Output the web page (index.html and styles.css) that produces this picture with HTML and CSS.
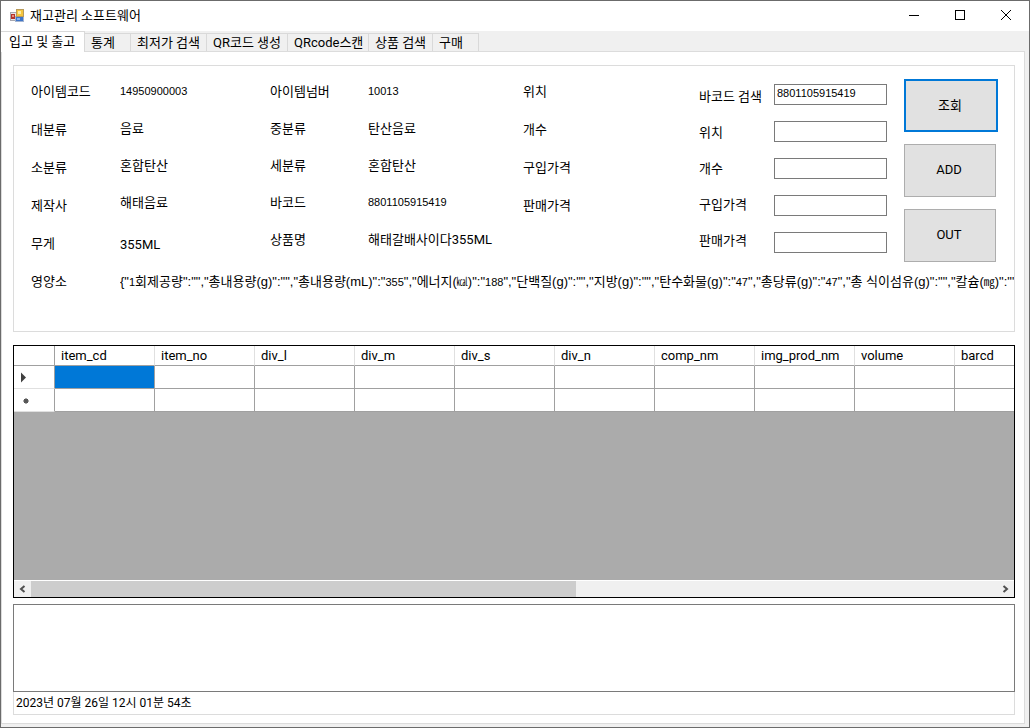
FILE: index.html
```html
<!DOCTYPE html>
<html lang="ko">
<head>
<meta charset="utf-8">
<title>재고관리 소프트웨어</title>
<link rel="stylesheet" href="styles.css">
</head>
<body>
<div class="window">
  <header class="titlebar">
    <svg class="app-icon" width="16" height="16" viewBox="0 0 16 16" aria-hidden="true">
      <rect x="0.500" y="4.500" width="6" height="8" fill="#e8e4e4" stroke="#a8a8b0"/>
      <rect x="1" y="6" width="4" height="5" fill="#b5332a"/>
      <rect x="2" y="7" width="2" height="2" fill="#e89080"/>
      <rect x="5.500" y="8.500" width="8" height="5" fill="#3d74c8" stroke="#a3b4d0"/>
      <rect x="7" y="10" width="3" height="2" fill="#8ab4ec"/>
      <rect x="6.500" y="1.500" width="7" height="7" fill="#f5c53c" stroke="#b89a5a"/>
      <rect x="8" y="3" width="3" height="3" fill="#fdeba0"/>
    </svg>
    <h1 class="title">재고관리 소프트웨어</h1>
    <div class="controls">
      <button class="control" type="button" aria-label="최소화"><svg width="10" height="10" viewBox="0 0 10 10"><path d="M0 5.500H10" stroke="#000"/></svg></button>
      <button class="control" type="button" aria-label="최대화"><svg width="10" height="10" viewBox="0 0 10 10"><rect x=".5" y=".5" width="9" height="9" fill="none" stroke="#000"/></svg></button>
      <button class="control" type="button" aria-label="닫기"><svg width="10" height="10" viewBox="0 0 10 10"><path d="M0 0L10 10M10 0L0 10" stroke="#000"/></svg></button>
    </div>
  </header>
  <nav class="tabs" role="tablist">
    <button class="tab active" type="button" role="tab" aria-selected="true">입고 및 출고</button>
    <button class="tab tab-s" type="button" role="tab">통계</button>
    <button class="tab tab-m" type="button" role="tab">최저가 검색</button>
    <button class="tab tab-l" type="button" role="tab">QR코드 생성</button>
    <button class="tab tab-l" type="button" role="tab">QRcode스캔</button>
    <button class="tab tab-n" type="button" role="tab">상품 검색</button>
    <button class="tab tab-s" type="button" role="tab">구매</button>
  </nav>
  <main class="page">
    <section class="details">
      <div class="labels"><span>아이템코드</span><span>대분류</span><span>소분류</span><span>제작사</span><span>무게</span></div>
      <div class="values spread"><span class="num">14950900003</span><span>음료</span><span>혼합탄산</span><span>해태음료</span><span>355ML</span></div>
      <div class="values"><span>아이템넘버</span><span>중분류</span><span>세분류</span><span>바코드</span><span>상품명</span></div>
      <div class="values"><span class="num">10013</span><span>탄산음료</span><span>혼합탄산</span><span class="num">8801105915419</span><span>해태갈배사이다355ML</span></div>
      <div class="labels"><span>위치</span><span>개수</span><span>구입가격</span><span>판매가격</span></div>
      <div class="field-labels">
        <label for="barcode">바코드 검색</label><label for="place">위치</label><label for="count">개수</label><label for="buy">구입가격</label><label for="sell">판매가격</label>
      </div>
      <div class="fields">
        <input class="num" id="barcode" type="text" value="8801105915419">
        <input class="num" id="place" type="text">
        <input class="num" id="count" type="text">
        <input class="num" id="buy" type="text">
        <input class="num" id="sell" type="text">
      </div>
      <div class="actions">
        <button class="action default" type="button">조회</button>
        <button class="action" type="button">ADD</button>
        <button class="action" type="button">OUT</button>
      </div>
      <span class="nutrition-label">영양소</span>
      <span class="nutrition">{"<span class="num">1</span>회제공량":"","총내용량(g)":"","총내용량(mL)":"<span class="num">355</span>","에너지(<span class="num">㎉</span>)":"<span class="num">188</span>","단백질(g)":"","지방(g)":"","탄수화물(g)":"<span class="num">47</span>","총당류(g)":"<span class="num">47</span>","총 식이섬유(g)":"","칼슘(<span class="num">㎎</span>)":""</span>
    </section>
    <section class="data">
      <div class="table-view">
        <table>
          <thead><tr><th class="stub"></th><th>item_cd</th><th>item_no</th><th>div_l</th><th>div_m</th><th>div_s</th><th>div_n</th><th>comp_nm</th><th>img_prod_nm</th><th>volume</th><th>barcd</th></tr></thead>
          <tbody>
            <tr><th class="stub"><svg width="22" height="12" viewBox="0 0 22 12"><path d="M7 1.500L12 6.500L7 11.500Z" fill="#404040"/></svg></th><td class="selected"></td><td></td><td></td><td></td><td></td><td></td><td></td><td></td><td></td><td></td></tr>
            <tr><th class="stub"><svg width="22" height="12" viewBox="0 0 22 12"><circle cx="12" cy="7" r="2" fill="#444"/><path d="M12 4V10M9 7H15M10 5L14 9M14 5L10 9" stroke="#555"/></svg></th><td></td><td></td><td></td><td></td><td></td><td></td><td></td><td></td><td></td><td></td></tr>
          </tbody>
        </table>
      </div>
      <div class="scrollbar">
        <button class="arrow" type="button" aria-label="왼쪽"><svg width="7" height="8" viewBox="0 0 7 8"><path d="M5.500 1L2 4L5.500 7" fill="none" stroke="#505050" stroke-width="2"/></svg></button>
        <div class="track"><div class="thumb"></div></div>
        <button class="arrow" type="button" aria-label="오른쪽"><svg width="7" height="8" viewBox="0 0 7 8"><path d="M1.500 1L5 4L1.500 7" fill="none" stroke="#505050" stroke-width="2"/></svg></button>
      </div>
    </section>
    <textarea class="log" aria-label="기록"></textarea>
    <footer class="clock">2023년 07월 26일 12시 01분 54초</footer>
  </main>
</div>
</body>
</html>
```
FILE: styles.css
```css
* { box-sizing: border-box; }
body, button, input, textarea {
  margin: 0;
  font-family: Roboto, "Noto Sans CJK KR", sans-serif;
  font-size: 13px;
  color: #000;
}
.window {
  display: flex;
  flex-direction: column;
  min-height: 100vh;
  border: 1px solid #6b6b6b;
  background: #f0f0f0;
}
.titlebar {
  display: flex;
  align-items: center;
  height: 30px;
  padding-left: 9px;
  background: #fff;
}
.title { flex: 1; margin: 0 0 0 4px; font-size: 13px; font-weight: 400; line-height: 28px; }
.controls { display: flex; align-self: stretch; }
.control {
  display: flex;
  align-items: center;
  justify-content: center;
  width: 46px;
  padding: 0 0 2px;
  border: 0;
  background: transparent;
}
.tabs { display: flex; align-items: flex-end; height: 20px; white-space: nowrap; }
.tab {
  height: 18px;
  padding: 0 0 0 6px;
  border: 1px solid #d9d9d9;
  border-width: 1px 1px 0 0;
  background: #f0f0f0;
  line-height: 17px;
  text-align: left;
}
.tab.active {
  position: relative;
  z-index: 1;
  width: 84px;
  height: 21px;
  margin-bottom: -1px;
  padding: 0 0 2px 8px;
  background: #fff;
}
.tab-s { width: 46px; }
.tab-m { width: 76px; }
.tab-l { width: 81px; }
.tab-n { width: 64px; }
.page {
  flex: 1;
  display: flex;
  flex-direction: column;
  margin: 0 4px 3px 0;
  padding: 13px 9px 8px 11px;
  border: 1px solid #dcdcdc;
  background: #fff;
}
.details {
  display: grid;
  grid-template-columns: 89px 150px 98px 155px 1fr 75px 130px 94px;
  align-content: start;
  min-height: 267px;
  padding: 7px 16px 0 17px;
  border: 1px solid #dcdcdc;
  white-space: nowrap;
}
.labels, .values, .field-labels, .fields, .actions { display: flex; flex-direction: column; }
.labels { line-height: 38px; }
.values { line-height: 37px; }
.values span { height: 37px; }
.spread span:last-child { margin-top: auto; }
.details .num { font-family: "Liberation Sans", "Noto Sans CJK KR", sans-serif; font-size: 11px; }
.field-labels { padding-top: 6px; line-height: 36px; }
.fields { align-items: flex-start; gap: 16px; padding-top: 11px; }
.fields input {
  width: 113px;
  height: 21px;
  padding: 0 2px 4px;
  border: 1px solid #7a7a7a;
  background: #fff;
}
.actions { align-items: flex-start; gap: 12px; padding-top: 6px; }
.action {
  width: 92px;
  height: 53px;
  padding: 0 2px 2px 0;
  border: 1px solid #adadad;
  background: #e1e1e1;
}
.action.default { width: 94px; border: 2px solid #0078d7; }
.nutrition-label, .nutrition { line-height: 38px; }
.nutrition {
  grid-column: 2 / -1;
  min-width: 0;
  margin-right: -16px;
  overflow: hidden;
  font-family: "Liberation Sans", "Noto Sans CJK KR", sans-serif;
}
.data {
  flex: 1;
  display: flex;
  flex-direction: column;
  margin-top: 13px;
  border: 1px solid #000;
  background: #ababab;
}
.table-view { flex: 1; overflow: hidden; display: grid; align-content: start; }
table { width: 1041px; table-layout: fixed; border-collapse: separate; border-spacing: 0; background: #fff; }
th, td {
  width: 100px;
  height: 23px;
  padding: 0 6px;
  border: 1px solid #a0a0a0;
  border-width: 0 1px 1px 0;
  font-weight: 400;
  text-align: left;
}
thead th { height: 20px; border-right-color: #e0e0e0; line-height: 18px; }
.stub { width: 41px; padding: 0; }
thead .stub { border-right-color: #a0a0a0; }
tbody .stub { border-bottom-color: #e0e0e0; }
.stub svg { display: block; }
.selected { background: #0078d7; }
.scrollbar { display: flex; height: 17px; border-top: 1px solid #fff; background: #f0f0f0; }
.arrow {
  display: flex;
  align-items: center;
  justify-content: center;
  width: 17px;
  padding: 0;
  border: 0;
  background: transparent;
}
.track { flex: 1; }
.thumb { width: 56.4%; height: 100%; background: #cdcdcd; }
.log {
  display: block;
  height: 88px;
  margin-top: 6px;
  border: 1px solid #7a7a7a;
  resize: none;
}
.clock {
  height: 23px;
  padding-left: 2px;
  border: 1px solid #dcdcdc;
  border-top: 0;
  font-size: 12px;
  line-height: 23px;
}
```
